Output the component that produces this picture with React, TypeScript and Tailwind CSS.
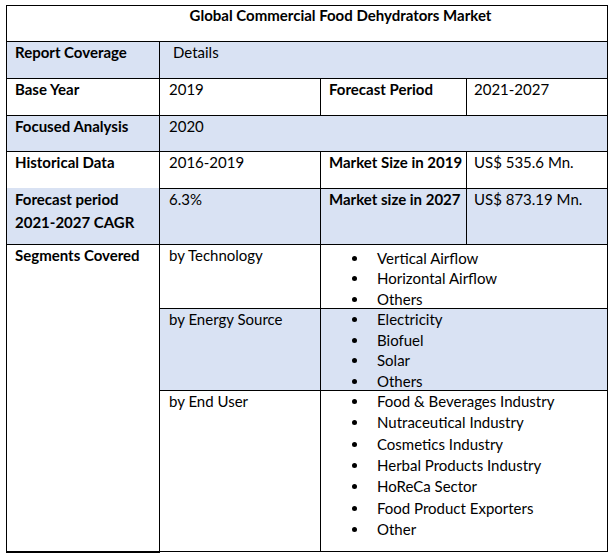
const blue = "bg-[#d9e2f3]";

const technology = ["Vertical Airflow", "Horizontal Airflow", "Others"];
const energy = ["Electricity", "Biofuel", "Solar", "Others"];
const endUser = [
  "Food & Beverages Industry",
  "Nutraceutical Industry",
  "Cosmetics Industry",
  "Herbal Products Industry",
  "HoReCa Sector",
  "Food Product Exporters",
  "Other",
];

const Bullets = ({ items, className, row }: { items: string[]; className: string; row: string }) => (
  <ul className={`pl-[31px] ${className}`}>
    {items.map((item) => (
      <li key={item} className={`flex items-center leading-[21px] ${row}`}>
        <span className="w-[5px] h-[5px] rounded-full bg-black shrink-0 mr-[20px]" />
        {item}
      </li>
    ))}
  </ul>
);

const App = () => {
  const cell = "leading-[20px]";
  return (
    <div className="w-[613px] h-[560px] bg-white pt-[5px] pl-[6px] font-['Lato',sans-serif] text-[15px] text-black">
      <div className="w-[602px] grid grid-cols-[152px_160px_145px_140px] grid-rows-[35px_36px_36px_35px_36px_55px_63px_81px_160px] gap-px p-px bg-black">
        <div className="col-span-4 bg-white flex justify-center pl-[67px] font-bold leading-[18px]">
          Global Commercial Food Dehydrators Market
        </div>

        <div className={`${blue} ${cell} pl-2 font-bold`}>Report Coverage</div>
        <div className={`${blue} ${cell} col-span-3 pl-[13px]`}>Details</div>

        <div className={`bg-white ${cell} pl-2 font-bold`}>Base Year</div>
        <div className={`bg-white ${cell} pl-[9px]`}>2019</div>
        <div className={`bg-white ${cell} pl-2 font-bold`}>Forecast Period</div>
        <div className={`bg-white ${cell} pl-[7px]`}>2021-2027</div>

        <div className={`${blue} ${cell} pl-2 font-bold`}>Focused Analysis</div>
        <div className={`${blue} ${cell} col-span-3 pl-[9px]`}>2020</div>

        <div className={`bg-white ${cell} pl-2 font-bold`}>Historical Data</div>
        <div className={`bg-white ${cell} pl-[9px]`}>2016-2019</div>
        <div className={`bg-white ${cell} pl-2 font-bold`}>Market Size in 2019</div>
        <div className={`bg-white ${cell} pl-[7px]`}>US$ 535.6 Mn.</div>

        <div className={`${blue} pl-2 font-bold leading-[23px] -mt-px`}>
          Forecast period
          <br />
          2021-2027 CAGR
        </div>
        <div className={`${blue} pl-[9px] ${cell}`}>6.3%</div>
        <div className={`${blue} pl-2 font-bold ${cell}`}>Market size in 2027</div>
        <div className={`${blue} pl-[7px] ${cell}`}>US$ 873.19 Mn.</div>

        <div className={`bg-white ${cell} row-span-3 pl-2 font-bold`}>Segments Covered</div>
        <div className={`bg-white ${cell} pl-[9px]`}>by Technology</div>
        <div className="bg-white col-span-2">
          <Bullets items={technology} className="pt-[3px]" row="h-[20.5px]" />
        </div>

        <div className={`${blue} ${cell} pl-[9px]`}>by Energy Source</div>
        <div className={`${blue} col-span-2`}>
          <Bullets items={energy} className="" row="h-[20.7px]" />
        </div>

        <div className={`bg-white ${cell} pl-[9px]`}>by End User</div>
        <div className="bg-white col-span-2">
          <Bullets items={endUser} className="" row="h-[21.3px]" />
        </div>
      </div>
      <div className="w-[154px] h-px bg-black" />
    </div>
  );
};

export default App;
